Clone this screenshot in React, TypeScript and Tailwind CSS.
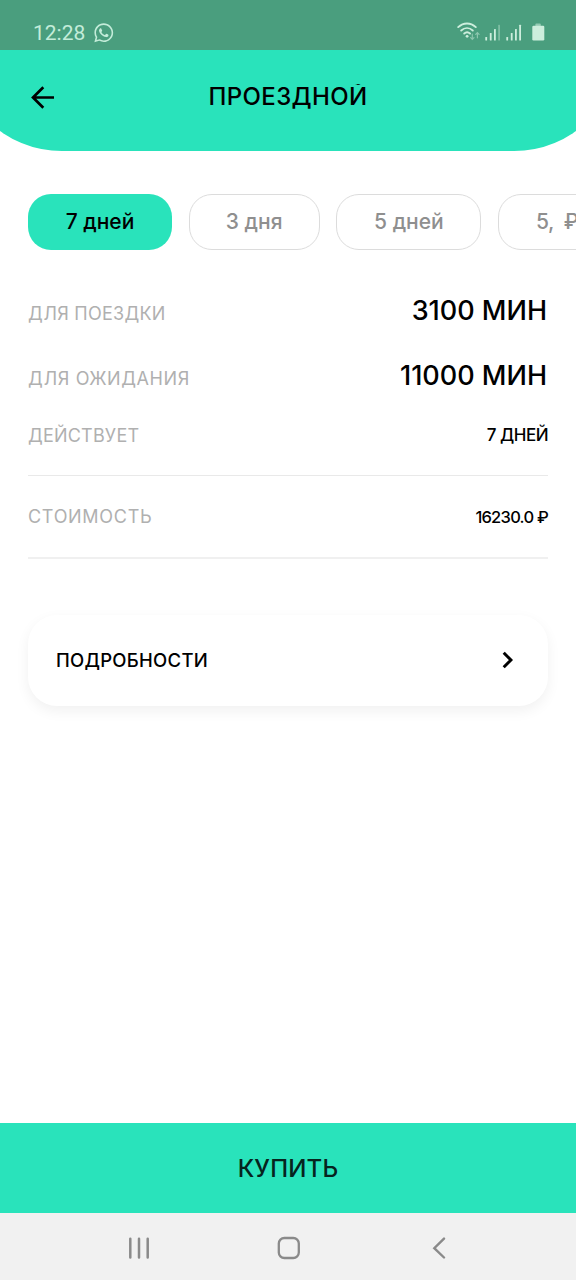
import { FaWhatsapp } from "react-icons/fa";

const plans = [
  { label: "7 дней", size: "w-[144px]", active: true },
  { label: "3 дня", size: "w-[131px]", active: false },
  { label: "5 дней", size: "w-[145px]", active: false },
  { label: "5,  ₽", size: "w-[120px]", active: false },
];

function Signal({ weak }: { weak?: boolean }) {
  return (
    <svg width="16" height="17" viewBox="0 0 16 17" fill="#cdeedd">
      <rect x="0.3" y="13" width="1.8" height="3.6" rx="0.5" />
      <rect x="4.8" y="9" width="1.8" height="7.6" rx="0.5" />
      <rect x="9" y="5" width="1.8" height="11.6" rx="0.5" />
      <rect x="13.2" y="0.8" width="1.8" height="15.8" rx="0.5" opacity={weak ? 0.4 : 1} />
    </svg>
  );
}

function StatusBar() {
  return (
    <div className="flex h-[50px] items-start bg-[#4a9e7e] pt-[22px] pl-[33px] pr-[31px] text-[#c3ecd9]">
      <span className="font-['Roboto',sans-serif] text-[21px] leading-[22px]">12:28</span>
      <FaWhatsapp className="ml-[7.5px] size-[21.5px]" />
      <div className="ml-auto flex items-start">
        <svg width="23" height="19" viewBox="0 0 23 19" fill="none" stroke="#cdeedd" strokeWidth="1.9" strokeLinecap="round">
          <path d="M1.2 5.1C6.4.3 13.6.3 18.8 5.1" />
          <path d="M4.2 8.5C7.7 5.3 12.3 5.3 15.8 8.5" />
          <path d="M7.2 11.5C9 9.9 11.2 9.9 13 11.5" />
          <circle cx="10.1" cy="14.3" r="1.4" fill="#cdeedd" stroke="none" />
          <g opacity="0.5" strokeWidth="1.2">
            <path d="M15.3 12.2v5M13.6 15.7l1.7 1.7 1.7-1.7" />
            <path d="M20.4 15.8v-4.9M18.7 12.4l1.7-1.7 1.7 1.7" />
          </g>
        </svg>
        <div className="ml-[5px] mt-[1.5px] flex gap-[5px]">
          <Signal weak />
          <Signal />
        </div>
        <svg className="ml-[10px] mt-px" width="13" height="18" viewBox="0 0 13 18" fill="#cdeedd">
          <rect x="3.4" y="0.4" width="5.4" height="3" rx="1" opacity="0.55" />
          <rect x="0.3" y="2.8" width="12" height="14.6" rx="1.2" />
        </svg>
      </div>
    </div>
  );
}

export default function App() {
  return (
    <div className="flex h-[1280px] w-[576px] flex-col overflow-hidden bg-white font-['Inter',sans-serif] text-black">
      <header className="h-[151px] shrink-0 overflow-hidden">
        <div className="-mx-[44px] h-full overflow-hidden rounded-b-[106px] bg-[#29e3bb]">
          <div className="mx-[44px]">
            <StatusBar />
            <div className="grid grid-cols-[66px_1fr_66px] pt-[34px]">
              <svg className="ml-[30px]" width="26" height="26" viewBox="0 0 26 26" fill="none" stroke="black" strokeWidth="2.7" strokeLinejoin="miter">
                <path d="M24 13.5H3.5M13.3 3.3L3 13.5l10.3 10.2" />
              </svg>
              <h1 className="overflow-hidden pb-1 text-center text-[24px] leading-[26px] font-medium tracking-[0.35px]">ПРОЕЗДНОЙ</h1>
            </div>
          </div>
        </div>
      </header>

      <nav className="mt-[42.5px] flex shrink-0 gap-[16.7px] overflow-hidden pl-7">
        {plans.map((p) => (
          <button
            key={p.label}
            className={`${p.size} h-[56px] shrink-0 rounded-[23px] text-[21px] font-medium whitespace-pre ${
              p.active ? "bg-[#29e3bb]" : "border border-[#dcdcdc] text-[#8f8f8f]"
            } ${p.label.endsWith("₽") ? "pl-[37px] text-left tracking-[-0.5px]" : "text-center"}`}
          >
            {p.label}
          </button>
        ))}
      </nav>

      <main className="px-7 text-[18px] text-[#b0b0b0]">
        <div className="mt-[41.5px] flex h-[40px] items-baseline justify-between">
          <span className="tracking-[0.25px]">ДЛЯ ПОЕЗДКИ</span>
          <span className="pr-px text-[27px] leading-[40px] font-medium text-black">3100 МИН</span>
        </div>
        <div className="mt-[25px] flex h-[40px] items-baseline justify-between">
          <span className="tracking-[0.6px]">ДЛЯ ОЖИДАНИЯ</span>
          <span className="pr-px text-[27px] leading-[40px] font-medium text-black">11000 МИН</span>
        </div>
        <div className="flex h-[80px] items-center justify-between border-b border-[#e9e9e9] pb-px">
          <span className="tracking-[0.2px]">ДЕЙСТВУЕТ</span>
          <span className="pt-px text-[17px] font-medium tracking-[-0.5px] text-black">7 ДНЕЙ</span>
        </div>
        <div className="flex h-[83px] items-center justify-between border-b-2 border-[#f0f0f0]">
          <span className="tracking-[0.7px]">СТОИМОСТЬ</span>
          <span className="pt-[2px] text-[16.5px] font-medium tracking-[-0.75px] text-black">16230.0 ₽</span>
        </div>
        <button className="mt-[56px] flex h-[91px] w-full items-center justify-between rounded-[29px] bg-white pl-[28px] pr-[33px] text-black shadow-[0_5px_14px_rgba(0,0,0,0.06)]">
          <span className="text-[18.5px] font-medium tracking-[0.27px]">ПОДРОБНОСТИ</span>
          <svg className="mb-px" width="14" height="18" viewBox="0 0 14 18" fill="none" stroke="black" strokeWidth="3">
            <path d="M2.7 1.8L9.9 9l-7.2 7.2" />
          </svg>
        </button>
      </main>

      <button className="mt-auto h-[90px] shrink-0 bg-[#29e3bb] pt-[2px] text-[24px] font-medium tracking-[0.2px] text-[#06241e]">КУПИТЬ</button>
      <footer className="flex h-[67px] shrink-0 items-center justify-between bg-[#f1f1f1] pt-[2px] pl-[128px] pr-[129px]">
        <svg width="22" height="22" viewBox="0 0 22 22" fill="none" stroke="#8a8a8a" strokeWidth="2.5" strokeLinecap="round">
          <path d="M2.3 1.8v18.8M11 1.8v18.8M19.7 1.8v18.8" />
        </svg>
        <svg className="mr-[4px]" width="24" height="24" viewBox="0 0 24 24" fill="none" stroke="#8a8a8a" strokeWidth="2.3">
          <rect x="1.8" y="2" width="20" height="20" rx="5.5" />
        </svg>
        <svg width="15" height="22" viewBox="0 0 15 22" fill="none" stroke="#8a8a8a" strokeWidth="2.4" strokeLinecap="round">
          <path d="M12 1.6L2.3 11.2l9.7 9.3" />
        </svg>
      </footer>
    </div>
  );
}
